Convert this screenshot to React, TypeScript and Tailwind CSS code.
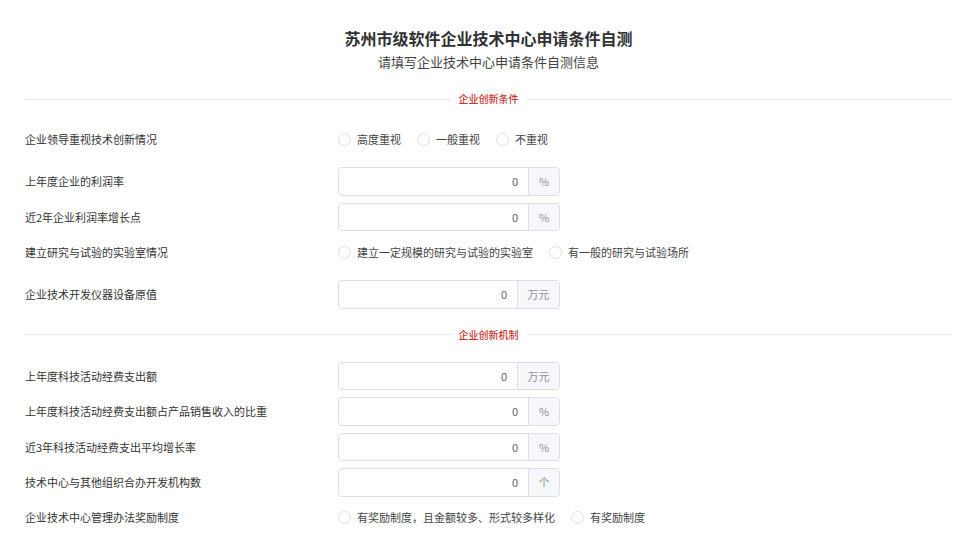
const font = { fontFamily: '"Noto Sans CJK SC", "Noto Sans", sans-serif' };

type Row =
  | { kind: "input"; label: string; unit: string }
  | { kind: "radio"; label: string; options: string[] };

const section1: Row[] = [
  { kind: "radio", label: "企业领导重视技术创新情况", options: ["高度重视", "一般重视", "不重视"] },
  { kind: "input", label: "上年度企业的利润率", unit: "%" },
  { kind: "input", label: "近2年企业利润率增长点", unit: "%" },
  {
    kind: "radio",
    label: "建立研究与试验的实验室情况",
    options: ["建立一定规模的研究与试验的实验室", "有一般的研究与试验场所"],
  },
  { kind: "input", label: "企业技术开发仪器设备原值", unit: "万元" },
];

const section2: Row[] = [
  { kind: "input", label: "上年度科技活动经费支出额", unit: "万元" },
  { kind: "input", label: "上年度科技活动经费支出额占产品销售收入的比重", unit: "%" },
  { kind: "input", label: "近3年科技活动经费支出平均增长率", unit: "%" },
  { kind: "input", label: "技术中心与其他组织合办开发机构数", unit: "个" },
  {
    kind: "radio",
    label: "企业技术中心管理办法奖励制度",
    options: ["有奖励制度，且金额较多、形式较多样化", "有奖励制度"],
  },
];

function Divider({ title, className }: { title: string; className: string }) {
  return (
    <div className={`flex h-[14px] items-center ${className}`}>
      <div className="h-px flex-1 bg-[#ece2e4]" />
      <span className="px-[8px] text-[10px] font-medium leading-[14px] text-[#cc3430]">{title}</span>
      <div className="h-px flex-1 bg-[#ece2e4]" />
    </div>
  );
}

function FormRow({ row }: { row: Row }) {
  return (
    <div className={`flex items-center ${row.kind === "radio" ? "mb-[14px] h-[28px]" : "mb-[7px] h-[28.5px]"}`}>
      <div className="w-[313px] shrink-0 text-[11px] text-[#333]">{row.label}</div>
      {row.kind === "input" ? (
        <div className="flex h-full w-[222px] rounded-[4px] border border-[#dcdfe6] text-[11px]">
          <div className="flex flex-1 items-center justify-end pr-[10px] text-[#606266]">0</div>
          <div
            className={`flex items-center justify-center rounded-r-[4px] border-l border-[#dcdfe6] bg-[#f5f7fa] text-[#909399] ${
              row.unit === "万元" ? "w-[42px]" : "w-[31px]"
            }`}
          >
            {row.unit}
          </div>
        </div>
      ) : (
        <div className="flex items-center gap-[16px]">
          {row.options.map((o) => (
            <label key={o} className="flex items-center gap-[6px] text-[11px] text-[#444]">
              <span className="box-border h-[13px] w-[13px] rounded-full border border-[#dcdfe6] bg-white" />
              <span>{o}</span>
            </label>
          ))}
        </div>
      )}
    </div>
  );
}

export default function App() {
  return (
    <div className="min-h-[544px] w-full bg-white pl-[25px] pr-[22px]" style={font}>
      <div className="pt-[26px] text-center">
        <h1 className="h-[24px] text-[16px] font-bold leading-[24px] text-[#2f3033]">
          苏州市级软件企业技术中心申请条件自测
        </h1>
        <p className="mt-[2px] h-[20px] text-[13px] leading-[20px] text-[#444]">请填写企业技术中心申请条件自测信息</p>
      </div>

      <Divider title="企业创新条件" className="mb-[19px] mt-[20px]" />
      {section1.map((r) => (
        <FormRow key={r.label} row={r} />
      ))}

      <Divider title="企业创新机制" className="mb-[20px] mt-[19px]" />
      {section2.map((r) => (
        <FormRow key={r.label} row={r} />
      ))}
    </div>
  );
}
